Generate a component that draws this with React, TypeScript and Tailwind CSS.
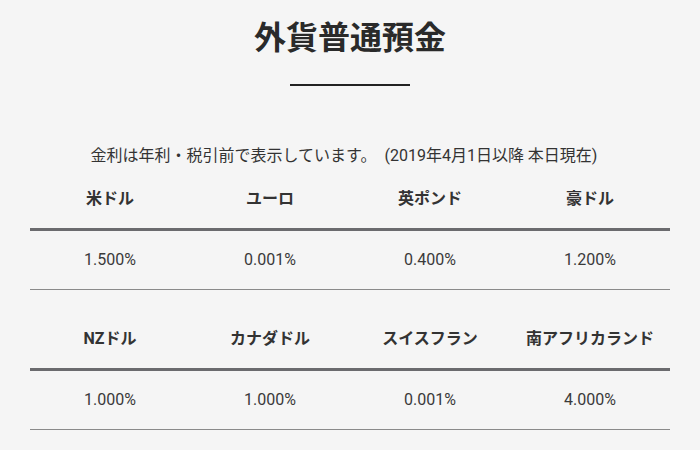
const tables = [
  [
    { name: "米ドル", rate: "1.500%" },
    { name: "ユーロ", rate: "0.001%" },
    { name: "英ポンド", rate: "0.400%" },
    { name: "豪ドル", rate: "1.200%" },
  ],
  [
    { name: "NZドル", rate: "1.000%" },
    { name: "カナダドル", rate: "1.000%" },
    { name: "スイスフラン", rate: "0.001%" },
    { name: "南アフリカランド", rate: "4.000%" },
  ],
];

function RateTable({ rows }: { rows: { name: string; rate: string }[] }) {
  return (
    <div className="mx-[30px]">
      <div className="grid h-[61px] grid-cols-4 items-center border-b-[3px] border-[#6b6b6e]">
        {rows.map((r) => (
          <div key={r.name} className="text-center text-[16px] font-bold text-[#333]">
            {r.name}
          </div>
        ))}
      </div>
      <div className="grid h-[59px] grid-cols-4 items-center border-b border-[#8a8a8a]">
        {rows.map((r) => (
          <div key={r.name} className="text-center text-[16px] text-[#3a3a3a]">
            {r.rate}
          </div>
        ))}
      </div>
    </div>
  );
}

export default function App() {
  return (
    <div className="h-[450px] w-[700px] overflow-hidden bg-[#f5f5f5] font-['Roboto','Noto_Sans_CJK_JP',sans-serif] text-[#333]">
      <h1 className="pt-[14px] text-center text-[32px] font-bold leading-[48px] text-[#2a2a2a]">
        外貨普通預金
      </h1>
      <div className="mx-auto mt-[22px] h-[2px] w-[120px] bg-[#222]" />
      <p className="mt-[58px] pr-[12px] text-center text-[16px] leading-[24px] text-[#333]">
        金利は年利・税引前で表示しています。　(2019年4月1日以降 本日現在)
      </p>
      <div className="mt-[2px]">
        <RateTable rows={tables[0]} />
      </div>
      <div className="mt-[20px]">
        <RateTable rows={tables[1]} />
      </div>
    </div>
  );
}
